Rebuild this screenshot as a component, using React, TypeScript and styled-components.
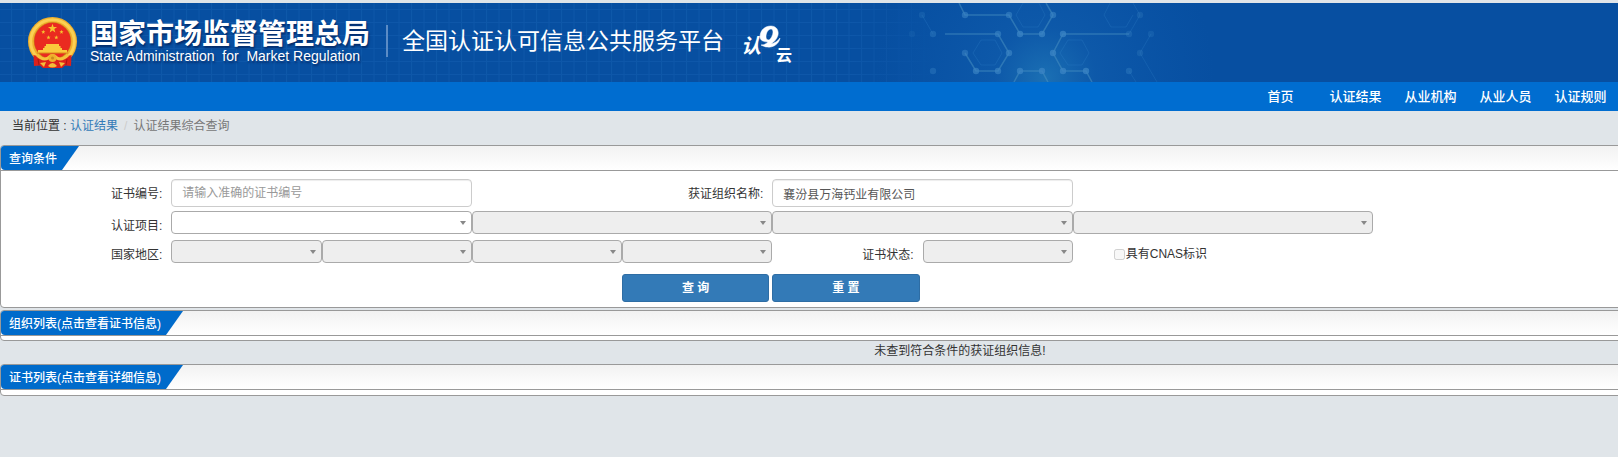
import React from "react";
import styled, { createGlobalStyle } from "styled-components";

const GlobalStyle = createGlobalStyle`
  * { box-sizing: border-box; }
  body {
    margin: 0;
    background: #e0e5e9;
    color: #333;
    font-family: "Liberation Sans", "Noto Sans CJK SC", sans-serif;
    font-size: 12px;
    line-height: 20px;
  }
`;

const Page = styled.div`
  padding-top: 3px;
  overflow: hidden;
`;

const Banner = styled.header`
  position: relative;
  display: flex;
  align-items: center;
  height: 79px;
  padding-left: 28px;
  background: #074fa1;
  color: #fff;
  overflow: hidden;
`;

const BannerArt = styled.svg`
  position: absolute;
  left: 0;
  top: 0;
`;

const Brand = styled.div`
  position: relative;
  display: flex;
  align-items: center;
`;

const BrandText = styled.div`
  margin-left: 12px;
  padding-bottom: 2px;
  text-shadow: 1px 2px 2px rgba(0, 20, 70, 0.6);
`;

const BrandName = styled.div`
  font-size: 28px;
  line-height: 28px;
  font-weight: 700;
`;

const BrandEnglish = styled.div`
  font-size: 14px;
  line-height: 14px;
  white-space: pre;
`;

const Divider = styled.span`
  width: 2px;
  height: 32px;
  margin: 0 14px 4px 16px;
  background: #5b8cc6;
`;

const PlatformName = styled.h1`
  margin: 0 12px 0 0;
  padding-bottom: 4px;
  font-size: 23px;
  line-height: 32px;
  font-weight: 400;
`;

const Nav = styled.nav`
  display: flex;
  justify-content: flex-end;
  background: #006dd0;
`;

const NavLink = styled.a`
  width: 75px;
  color: #fff;
  font-size: 13px;
  line-height: 29px;
  font-weight: 500;
  text-align: center;
  text-decoration: none;
`;

const Breadcrumb = styled.nav`
  display: flex;
  height: 34px;
  padding: 5px 12px;
  white-space: pre;
`;

const CrumbLink = styled.a`
  color: #337ab7;
  text-decoration: none;
`;

const CrumbSlash = styled.span`
  padding: 0 6px;
  color: #ccc;
`;

const CrumbCurrent = styled.span`
  color: #777;
`;

const Main = styled.main`
  min-width: 1920px;
`;

const Panel = styled.section<{ $gap?: number }>`
  margin-top: ${(p) => p.$gap ?? 0}px;
  border: 1px solid #999;
  border-radius: 4px;
  background: #fff;
  overflow: hidden;
`;

const PanelHead = styled.div`
  display: flex;
  height: 25px;
  border-bottom: 1px solid #999;
  background: linear-gradient(#f2f2f2, #fff);
`;

const PanelTab = styled.h2`
  margin: 0;
  padding: 1px 22px 0 8px;
  background: #006bcb;
  clip-path: polygon(0 0, 100% 0, calc(100% - 17px) 100%, 0 100%);
  border-bottom-left-radius: 4px;
  color: #fff;
  font-size: 12px;
  line-height: 25px;
  font-weight: 500;
`;

const PanelFoot = styled.div<{ $height: number }>`
  height: ${(p) => p.$height}px;
`;

const Form = styled.form`
  padding: 8px 95px 5px 20px;
`;

const FormRow = styled.div<{ $gap?: number }>`
  display: grid;
  grid-template-columns: repeat(12, 1fr);
  grid-auto-rows: 29px;
  align-items: start;
  margin-bottom: ${(p) => p.$gap ?? 0}px;
`;

const FieldLabel = styled.label<{ $span?: number }>`
  grid-column: span ${(p) => p.$span ?? 1};
  padding: 1px 9px 0 0;
  line-height: 29px;
  text-align: right;
`;

const TextInput = styled.input`
  grid-column: span 2;
  width: 100%;
  height: 28px;
  padding: 0 10px;
  border: 1px solid #ccc;
  border-radius: 4px;
  box-shadow: inset 0 1px 1px rgba(0, 0, 0, 0.075);
  background: #fff;
  color: #555;
  font: inherit;
  &::placeholder { color: #999; }
`;

const SelectBox = styled.div<{ $span?: number }>`
  position: relative;
  grid-column: span ${(p) => p.$span ?? 1};
  &::after {
    content: "";
    position: absolute;
    right: 6px;
    top: 10px;
    border: solid transparent;
    border-width: 4px 3px 0;
    border-top-color: #888;
    pointer-events: none;
  }
`;

const Select = styled.select`
  display: block;
  width: 100%;
  height: 23px;
  padding: 0 20px 0 8px;
  appearance: none;
  border: 1px solid #aaa;
  border-radius: 4px;
  background: #fff;
  font: inherit;
  opacity: 1;
  &:disabled { background: #eee; }
`;

const CheckLabel = styled.label`
  grid-column: span 3;
  display: flex;
  align-items: center;
  gap: 1px;
  padding: 0 0 0 41px;
  line-height: 29px;
`;

const CheckBox = styled.input`
  width: 11px;
  height: 11px;
  margin: 0;
`;

const ButtonRow = styled.div`
  display: grid;
  grid-template-columns: repeat(12, 1fr);
  margin-top: 5px;
`;

const Button = styled.button<{ $start: number }>`
  grid-column: ${(p) => p.$start} / span 1;
  height: 28px;
  margin-right: 3px;
  border: 1px solid #2e6da4;
  border-radius: 3px;
  background: #337ab7;
  color: #fff;
  font: inherit;
  font-weight: 700;
`;

const Message = styled.p`
  margin: 0;
  line-height: 20px;
  text-align: center;
`;

function Dropdown({ label, span, disabled }: { label: string; span?: number; disabled?: boolean }) {
  return (
    <SelectBox $span={span}>
      <Select aria-label={label} disabled={disabled} />
    </SelectBox>
  );
}

const nodes = [
  [922, 12, 0.3], [965, 12, 0.8], [1009, 12, 0.8], [1053, 12, 0.8], [1140, 12, 0.35],
  [912, 31, 0.2], [933, 31, 0.5], [998, 31, 0.8], [1020, 31, 1], [1042, 31, 1], [1063, 31, 1], [1129, 31, 0.4], [1151, 31, 0.3],
  [965, 50, 0.7], [1009, 50, 0.9], [1053, 50, 1], [1140, 50, 0.35],
  [933, 68, 0.5], [976, 68, 0.9], [998, 68, 0.9], [1020, 68, 1], [1042, 68, 1], [1063, 68, 1], [1086, 68, 1], [1129, 68, 0.5],
];

function Art() {
  return (
    <BannerArt width="1300" height="79" aria-hidden="true">
      <defs>
        <pattern id="fine" width="12.5" height="13" patternUnits="userSpaceOnUse" x="11" y="6">
          <path d="M.5 0V13M0 .5H12.5" stroke="#2a78c8" strokeOpacity=".22" />
        </pattern>
        <linearGradient id="fade"><stop offset=".9" stopColor="#fff" /><stop offset="1" stopColor="#fff" stopOpacity="0" /></linearGradient>
        <mask id="m"><rect width="945" height="79" fill="url(#fade)" /></mask>
        <radialGradient id="glow" gradientUnits="userSpaceOnUse" cx="1045" cy="75" r="170">
          <stop offset="0" stopColor="#1b70b4" />
          <stop offset=".3" stopColor="#0f5bab" stopOpacity=".8" />
          <stop offset="1" stopColor="#0b57ab" stopOpacity="0" />
        </radialGradient>
      </defs>
      <rect width="945" height="79" fill="url(#fine)" mask="url(#m)" />
      <rect x="860" width="380" height="79" fill="url(#glow)" />
      <g fill="none" stroke="#4c94c4" strokeWidth="1.5" strokeOpacity=".5">
        <path d="M959 0L965 12H1009L1020 31H1042L1053 12L1046 0M945 31H998L1009 50L998 68H976L965 50M1129 31H1063L1053 50L1063 68H1086L1092 79M1014 79L1020 68H1042L1048 79" />
      </g>
      <g fill="none" stroke="#3c8cd0" strokeOpacity=".22">
        <path d="M1129 31L1140 12L1133 0M1151 31L1140 50L1157 79M1129 68L1136 79M922 12L933 31" />
        <path d="M973 50L981 37H995L1002 50L995 62H981ZM1060 50L1068 37H1082L1089 50L1082 62H1068ZM1016 12L1023 0H1039L1045 12L1038 24H1023ZM1104 12L1110 0M1104 12L1111 24H1126L1133 12" />
      </g>
      {nodes.map(([x, y, o]) => (
        <circle key={`${x}-${y}`} cx={x} cy={y} r="3.2" fill="#3b84c4" fillOpacity={o * 0.75} />
      ))}
    </BannerArt>
  );
}

function starPoints(cx: number, cy: number, r: number) {
  return Array.from({ length: 10 }, (_, i) => {
    const radius = i % 2 ? r * 0.4 : r;
    const a = (Math.PI * i) / 5 - Math.PI / 2;
    return `${cx + radius * Math.cos(a)},${cy + radius * Math.sin(a)}`;
  }).join(" ");
}

const stars = [[24.5, 11.5, 4.8], [15.3, 15, 2.2], [33.5, 15, 2.2], [20.5, 20.5, 2.2], [28.3, 20.5, 2.2]];

function Emblem() {
  return (
    <svg width="50" height="52" viewBox="0 0 50 52" role="img" aria-label="国徽">
      <circle cx="24.5" cy="24.5" r="24.5" fill="#efae2c" />
      <circle cx="24.5" cy="24.5" r="21.8" fill="none" stroke="#fbd052" strokeWidth="3" />
      <circle cx="24.5" cy="24" r="18.7" fill="#c9851a" />
      <circle cx="24.5" cy="24" r="18.2" fill="#ea2a20" />
      {stars.map(([x, y, r]) => <polygon key={`${x}`} points={starPoints(x, y, r)} fill="#f7c52f" />)}
      <path d="M18 27H31V29H32.500V31H34V33H39V36H10V33H15V31H16.500V29H18Z" fill="#fac93c" />
      <path d="M9 36H40" stroke="#d88a1c" />
      <path d="M5.500 38L13 40L18 43L24.500 41L31 43L36 40L43.500 38L43 49L37 48.500L34 51H15L12 48.500L6 49Z" fill="#dc211b" />
      <path d="M9 38Q15 44 20 41Q24.500 36 29 41Q34 44 40 38" fill="none" stroke="#f5c23c" strokeWidth="3" />
      <circle cx="24.5" cy="41" r="4" fill="#f0b02c" />
      <circle cx="24.5" cy="41" r="1.500" fill="#c98a1d" />
      <path d="M12 46L18 45L16 50ZM37 46L31 45L33 50ZM20 49Q24.500 43 29 49Q24.500 52 20 49" fill="#f3bd3a" />
      <path d="M10 42L11 48M39 42L38 48" stroke="#a91414" />
    </svg>
  );
}

const LogoText = styled.text`
  fill: #fff;
  font-family: "Noto Sans CJK SC", sans-serif;
  font-weight: 700;
`;

function CloudLogo() {
  return (
    <svg width="64" height="52" viewBox="-5 -8 64 52" role="img" aria-label="认e云">
      <LogoText x="0" y="28" fontSize="20" fontStyle="italic">认</LogoText>
      <path
        fillRule="evenodd"
        fill="#fff"
        stroke="#fff"
        strokeWidth=".5"
        d="M19 12C19 5 24 1 30 1C35 1 38 5 37 10C36 14 33 17 30 19C34 18 37 16 39 13C38 19 32 23 26 22C24 22 22 21 20 20C23 20 25 19 27 17C22 17 19 15 19 12ZM25 12C25 14 26 15 28 15C30 14 32 10 32 7C32 5 31 4 30 4C27 4 25 8 25 12Z"
      />
      <LogoText x="35" y="36" fontSize="16">云</LogoText>
    </svg>
  );
}

export default function App() {
  return (
    <Page>
      <GlobalStyle />
      <Banner>
        <Art />
        <Brand>
          <Emblem />
          <BrandText>
            <BrandName>国家市场监督管理总局</BrandName>
            <BrandEnglish>State Administration  for  Market Regulation</BrandEnglish>
          </BrandText>
          <Divider />
          <PlatformName>全国认证认可信息公共服务平台</PlatformName>
          <CloudLogo />
        </Brand>
      </Banner>
      <Nav>
        {["首页", "认证结果", "从业机构", "从业人员", "认证规则"].map((t) => <NavLink href="#" key={t}>{t}</NavLink>)}
      </Nav>
      <Breadcrumb>
        <span>当前位置 : </span>
        <CrumbLink href="#">认证结果</CrumbLink>
        <CrumbSlash>/</CrumbSlash>
        <CrumbCurrent>认证结果综合查询</CrumbCurrent>
      </Breadcrumb>
      <Main>
        <Panel>
          <PanelHead><PanelTab>查询条件</PanelTab></PanelHead>
          <Form>
            <FormRow $gap={3}>
              <FieldLabel htmlFor="cert">证书编号:</FieldLabel>
              <TextInput id="cert" placeholder="请输入准确的证书编号" />
              <FieldLabel htmlFor="org" $span={2}>获证组织名称:</FieldLabel>
              <TextInput id="org" defaultValue="襄汾县万海钙业有限公司" />
            </FormRow>
            <FormRow>
              <FieldLabel as="span">认证项目:</FieldLabel>
              <Dropdown label="认证项目" span={2} />
              <Dropdown label="认证项目" span={2} disabled />
              <Dropdown label="认证项目" span={2} disabled />
              <Dropdown label="认证项目" span={2} disabled />
            </FormRow>
            <FormRow>
              <FieldLabel as="span">国家地区:</FieldLabel>
              <Dropdown label="国家地区" disabled />
              <Dropdown label="国家地区" disabled />
              <Dropdown label="国家地区" disabled />
              <Dropdown label="国家地区" disabled />
              <FieldLabel as="span">证书状态:</FieldLabel>
              <Dropdown label="证书状态" disabled />
              <CheckLabel><CheckBox type="checkbox" disabled />具有CNAS标识</CheckLabel>
            </FormRow>
            <ButtonRow>
              <Button type="button" $start={5}>查 询</Button>
              <Button type="reset" $start={6}>重 置</Button>
            </ButtonRow>
          </Form>
        </Panel>
        <Panel $gap={2}>
          <PanelHead><PanelTab>组织列表(点击查看证书信息)</PanelTab></PanelHead>
          <PanelFoot $height={4} />
        </Panel>
        <Message>未查到符合条件的获证组织信息!</Message>
        <Panel $gap={3}>
          <PanelHead><PanelTab>证书列表(点击查看详细信息)</PanelTab></PanelHead>
          <PanelFoot $height={5} />
        </Panel>
      </Main>
    </Page>
  );
}
